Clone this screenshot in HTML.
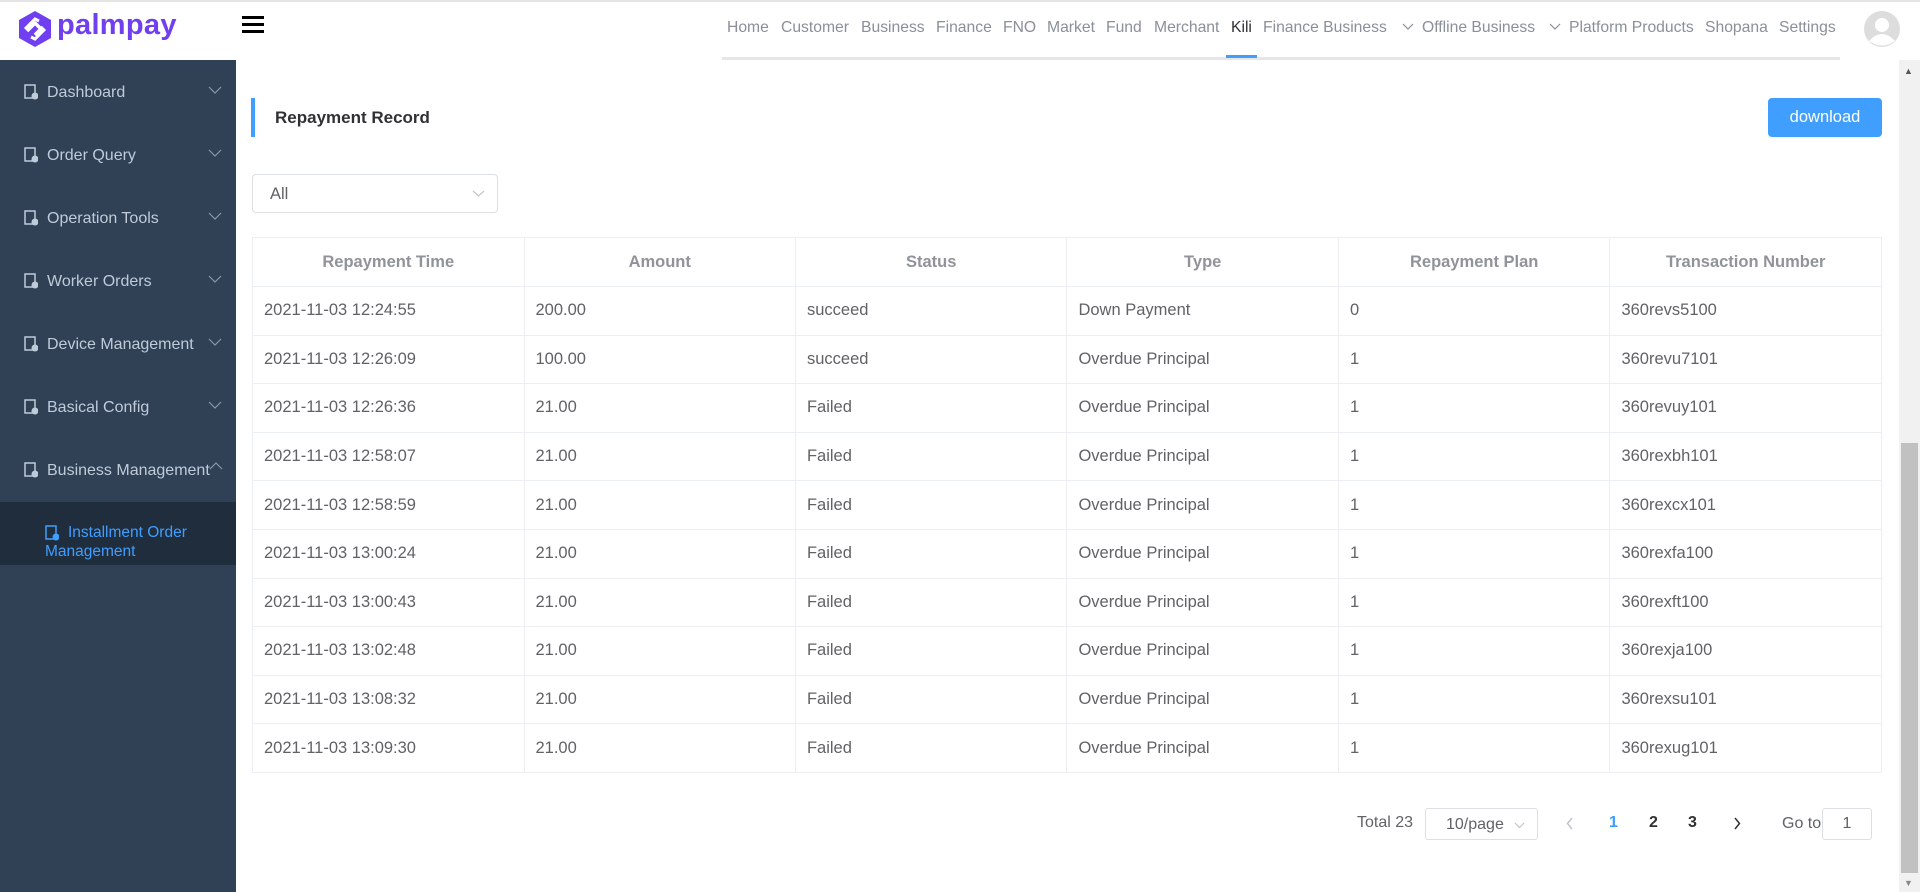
<!DOCTYPE html>
<html><head><meta charset="utf-8"><style>
*{box-sizing:border-box;margin:0;padding:0}
body{width:1920px;height:892px;overflow:hidden;position:relative;background:#fff;font-family:"Liberation Sans",Arial,sans-serif;}
.abs{position:absolute}
.hdr{left:0;top:0;width:1920px;height:60px;border-top:2px solid #e4e4e4;background:#fff}
.nav{left:722px;top:0;height:60px;width:1118px;border-bottom:3px solid #e6e6e6}
.nav span{position:absolute;top:19px;font-size:15.7px;color:#8a8f99;white-space:nowrap}
.nav svg{position:absolute;top:23px}
.side{left:0;top:60px;width:236px;height:832px;background:#304156}
.mi{position:absolute;left:0;width:236px;height:63px;color:#bfcbd9;font-size:16px}
.mi .t{position:absolute;left:47px;top:24px}
.mi .ic{position:absolute;left:24px;top:24px}
.mi .ch{position:absolute;left:208px;top:26px}
table{border-collapse:collapse;position:absolute;left:252px;top:237px;width:1630px;font-size:16.5px}
td,th{border:1px solid #ebeef5;height:48.6px;width:271.7px}
th{color:#909399;font-weight:bold;height:49px}
td{color:#606266;padding-left:11px}
</style></head><body>
<div class="abs hdr"></div>
<svg class="abs" style="left:15px;top:9px" width="40" height="40" viewBox="0 0 40 40">
<path d="M20 2 L36 11 L36 29 L20 38 L4 29 L4 11 Z" fill="#6f3ff0"/>
<path d="M12 22 L20 14 L26 20 L20 26" fill="none" stroke="#fff" stroke-width="3.5" stroke-linejoin="round"/>
<path d="M28 18 L20 26" fill="none" stroke="#fff" stroke-width="3.5"/>
<path d="M10 20 L20 10 L24 12" fill="none" stroke="#fff" stroke-width="3"/>
<path d="M30 20 L20 30 L16 28" fill="none" stroke="#fff" stroke-width="3"/>
</svg>
<div class="abs" style="left:57px;top:9px;font-size:29px;font-weight:bold;color:#6f3ff0;letter-spacing:0.3px">palmpay</div>
<div class="abs" style="left:242px;top:16px;width:22px;height:3px;background:#000;box-shadow:0 7px 0 #000,0 14px 0 #000"></div>
<div class="abs nav">
<span style="left:5px">Home</span><span style="left:59px">Customer</span><span style="left:139px">Business</span><span style="left:214px">Finance</span><span style="left:281px">FNO</span><span style="left:325px">Market</span><span style="left:384px">Fund</span><span style="left:432px">Merchant</span><span style="left:509px;color:#303133">Kili</span><span style="left:541px">Finance Business</span>
<svg style="left:680px" width="12" height="8"><path d="M1 1 L6 6 L11 1" fill="none" stroke="#8a8f99" stroke-width="1.2"/></svg>
<span style="left:700px">Offline Business</span>
<svg style="left:827px" width="12" height="8"><path d="M1 1 L6 6 L11 1" fill="none" stroke="#8a8f99" stroke-width="1.2"/></svg>
<span style="left:847px">Platform Products</span><span style="left:983px">Shopana</span><span style="left:1057px">Settings</span>
<div class="abs" style="left:504px;top:55px;width:31px;height:3px;background:#409eff"></div>
</div>
<svg class="abs" style="left:1863px;top:10px" width="38" height="38" viewBox="0 0 38 38"><circle cx="19" cy="19" r="18" fill="#ddd"/><circle cx="19" cy="15" r="7" fill="#fff"/><path d="M6 31 Q19 17 32 31 Q19 40 6 31Z" fill="#fff"/></svg>
<div class="abs side">
<div class="mi" style="top:0"><svg class="ic" width="14" height="16"><rect x="1" y="1" width="10" height="13" fill="none" stroke="#bfcbd9" stroke-width="1.5"/><circle cx="11" cy="12" r="3.5" fill="#bfcbd9"/></svg><span class="t">Dashboard</span><svg class="ch" width="14" height="8"><path d="M1 1 L7 7 L13 1" fill="none" stroke="#8b97a8" stroke-width="1.2"/></svg></div>
<div class="mi" style="top:63px"><svg class="ic" width="14" height="16"><rect x="1" y="1" width="10" height="13" fill="none" stroke="#bfcbd9" stroke-width="1.5"/><circle cx="11" cy="12" r="3.5" fill="#bfcbd9"/></svg><span class="t">Order Query</span><svg class="ch" width="14" height="8"><path d="M1 1 L7 7 L13 1" fill="none" stroke="#8b97a8" stroke-width="1.2"/></svg></div>
<div class="mi" style="top:126px"><svg class="ic" width="14" height="16"><rect x="1" y="1" width="10" height="13" fill="none" stroke="#bfcbd9" stroke-width="1.5"/><circle cx="11" cy="12" r="3.5" fill="#bfcbd9"/></svg><span class="t">Operation Tools</span><svg class="ch" width="14" height="8"><path d="M1 1 L7 7 L13 1" fill="none" stroke="#8b97a8" stroke-width="1.2"/></svg></div>
<div class="mi" style="top:189px"><svg class="ic" width="14" height="16"><rect x="1" y="1" width="10" height="13" fill="none" stroke="#bfcbd9" stroke-width="1.5"/><circle cx="11" cy="12" r="3.5" fill="#bfcbd9"/></svg><span class="t">Worker Orders</span><svg class="ch" width="14" height="8"><path d="M1 1 L7 7 L13 1" fill="none" stroke="#8b97a8" stroke-width="1.2"/></svg></div>
<div class="mi" style="top:252px"><svg class="ic" width="14" height="16"><rect x="1" y="1" width="10" height="13" fill="none" stroke="#bfcbd9" stroke-width="1.5"/><circle cx="11" cy="12" r="3.5" fill="#bfcbd9"/></svg><span class="t">Device Management</span><svg class="ch" width="14" height="8"><path d="M1 1 L7 7 L13 1" fill="none" stroke="#8b97a8" stroke-width="1.2"/></svg></div>
<div class="mi" style="top:315px"><svg class="ic" width="14" height="16"><rect x="1" y="1" width="10" height="13" fill="none" stroke="#bfcbd9" stroke-width="1.5"/><circle cx="11" cy="12" r="3.5" fill="#bfcbd9"/></svg><span class="t">Basical Config</span><svg class="ch" width="14" height="8"><path d="M1 1 L7 7 L13 1" fill="none" stroke="#8b97a8" stroke-width="1.2"/></svg></div>
<div class="mi" style="top:378px"><svg class="ic" width="14" height="16"><rect x="1" y="1" width="10" height="13" fill="none" stroke="#bfcbd9" stroke-width="1.5"/><circle cx="11" cy="12" r="3.5" fill="#bfcbd9"/></svg><span class="t">Business Management</span><svg class="ch" style="left:209px;top:24px" width="14" height="8"><path d="M1 7 L7 1 L13 7" fill="none" stroke="#8b97a8" stroke-width="1.2"/></svg></div>
<div class="abs" style="left:0;top:442px;width:236px;height:63px;background:#1f2d3d;color:#409eff;font-size:15.5px;line-height:19px">
<svg class="abs" style="left:45px;top:23px" width="14" height="16"><rect x="1" y="1" width="10" height="13" fill="none" stroke="#409eff" stroke-width="1.5"/><circle cx="11" cy="12" r="3.5" fill="#409eff"/></svg>
<div class="abs" style="left:45px;top:21px;width:180px;text-indent:23px">Installment Order Management</div></div>
</div>
<div class="abs" style="left:1899px;top:60px;width:21px;height:832px;background:#f1f1f1"></div>
<div class="abs" style="left:1901px;top:443px;width:17px;height:430px;background:#c1c1c1"></div>
<div class="abs" style="left:1904px;top:66px;font-size:9px;color:#555">▲</div>
<div class="abs" style="left:1904px;top:878px;font-size:9px;color:#888">▼</div>
<div class="abs" style="left:251px;top:98px;width:4px;height:39px;background:#409eff"></div>
<div class="abs" style="left:275px;top:108px;font-size:17px;font-weight:bold;color:#303133">Repayment Record</div>
<div class="abs" style="left:1768px;top:98px;width:114px;height:39px;background:#409eff;border-radius:4px;color:#fff;font-size:16.5px;text-align:center;line-height:39px">download</div>
<div class="abs" style="left:252px;top:174px;width:246px;height:39px;border:1px solid #dcdfe6;border-radius:4px;font-size:16.5px;color:#606266;padding:10px 0 0 17px">All<svg class="abs" style="left:219px;top:15px" width="13" height="8"><path d="M1 1 L6.5 6 L12 1" fill="none" stroke="#c0c4cc" stroke-width="1.2"/></svg></div>
<table>
<tr><th>Repayment Time</th><th>Amount</th><th>Status</th><th>Type</th><th>Repayment Plan</th><th>Transaction Number</th></tr>
<tr><td>2021-11-03 12:24:55</td><td>200.00</td><td>succeed</td><td>Down Payment</td><td>0</td><td>360revs5100</td></tr>
<tr><td>2021-11-03 12:26:09</td><td>100.00</td><td>succeed</td><td>Overdue Principal</td><td>1</td><td>360revu7101</td></tr>
<tr><td>2021-11-03 12:26:36</td><td>21.00</td><td>Failed</td><td>Overdue Principal</td><td>1</td><td>360revuy101</td></tr>
<tr><td>2021-11-03 12:58:07</td><td>21.00</td><td>Failed</td><td>Overdue Principal</td><td>1</td><td>360rexbh101</td></tr>
<tr><td>2021-11-03 12:58:59</td><td>21.00</td><td>Failed</td><td>Overdue Principal</td><td>1</td><td>360rexcx101</td></tr>
<tr><td>2021-11-03 13:00:24</td><td>21.00</td><td>Failed</td><td>Overdue Principal</td><td>1</td><td>360rexfa100</td></tr>
<tr><td>2021-11-03 13:00:43</td><td>21.00</td><td>Failed</td><td>Overdue Principal</td><td>1</td><td>360rexft100</td></tr>
<tr><td>2021-11-03 13:02:48</td><td>21.00</td><td>Failed</td><td>Overdue Principal</td><td>1</td><td>360rexja100</td></tr>
<tr><td>2021-11-03 13:08:32</td><td>21.00</td><td>Failed</td><td>Overdue Principal</td><td>1</td><td>360rexsu101</td></tr>
<tr><td>2021-11-03 13:09:30</td><td>21.00</td><td>Failed</td><td>Overdue Principal</td><td>1</td><td>360rexug101</td></tr>
</table>
<div class="abs" style="left:1357px;top:814px;font-size:16px;color:#606266">Total 23</div>
<div class="abs" style="left:1425px;top:808px;width:113px;height:32px;border:1px solid #dcdfe6;border-radius:3px;font-size:16px;color:#606266;padding:7px 0 0 20px">10/page<svg class="abs" style="left:88px;top:13px" width="11" height="7"><path d="M1 1 L5.5 5.5 L10 1" fill="none" stroke="#c0c4cc" stroke-width="1.2"/></svg></div>
<svg class="abs" style="left:1566px;top:817px" width="8" height="13"><path d="M6 1 L1.5 6.5 L6 12" fill="none" stroke="#c0c4cc" stroke-width="1.5"/></svg>
<div class="abs" style="left:1609px;top:814px;font-size:16px;font-weight:bold;color:#409eff">1</div>
<div class="abs" style="left:1649px;top:814px;font-size:16px;font-weight:bold;color:#303133">2</div>
<div class="abs" style="left:1688px;top:814px;font-size:16px;font-weight:bold;color:#303133">3</div>
<svg class="abs" style="left:1733px;top:817px" width="8" height="13"><path d="M2 1 L6.5 6.5 L2 12" fill="none" stroke="#303133" stroke-width="1.5"/></svg>
<div class="abs" style="left:1782px;top:815px;font-size:16px;color:#606266">Go to</div>
<div class="abs" style="left:1822px;top:808px;width:50px;height:32px;border:1px solid #dcdfe6;border-radius:3px;font-size:16px;color:#606266;text-align:center;line-height:30px">1</div>
</body></html>
